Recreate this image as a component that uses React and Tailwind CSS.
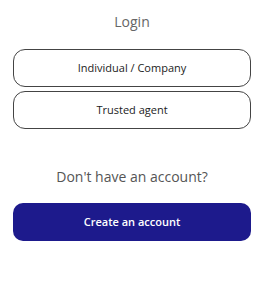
import React from 'react';

const App = () => {
  return (
    <div className="w-[264px] h-[300px] bg-white flex flex-col px-[13px]" style={{ fontFamily: '"Open Sans", "Noto Sans", sans-serif' }}>
      <h2 className="mt-[12px] h-[20px] leading-[20px] text-center text-[14px] text-[#666]">Login</h2>
      <div className="mt-[17px] flex flex-col gap-[4px]">
        <button type="button" className="h-[38px] w-full rounded-[12px] border border-[#444] text-[11px] font-medium text-[#222]">
          Individual / Company
        </button>
        <button type="button" className="h-[38px] w-full rounded-[12px] border border-[#444] text-[11px] font-medium text-[#222]">
          Trusted agent
        </button>
      </div>
      <p className="mt-[37px] h-[22px] leading-[22px] text-center text-[14px] text-[#555]">Don't have an account?</p>
      <button type="button" className="mt-[15px] h-[38px] w-full rounded-[10px] bg-[#1d1a8c] text-[11px] font-semibold text-white">
        Create an account
      </button>
    </div>
  );
};

export default App;
